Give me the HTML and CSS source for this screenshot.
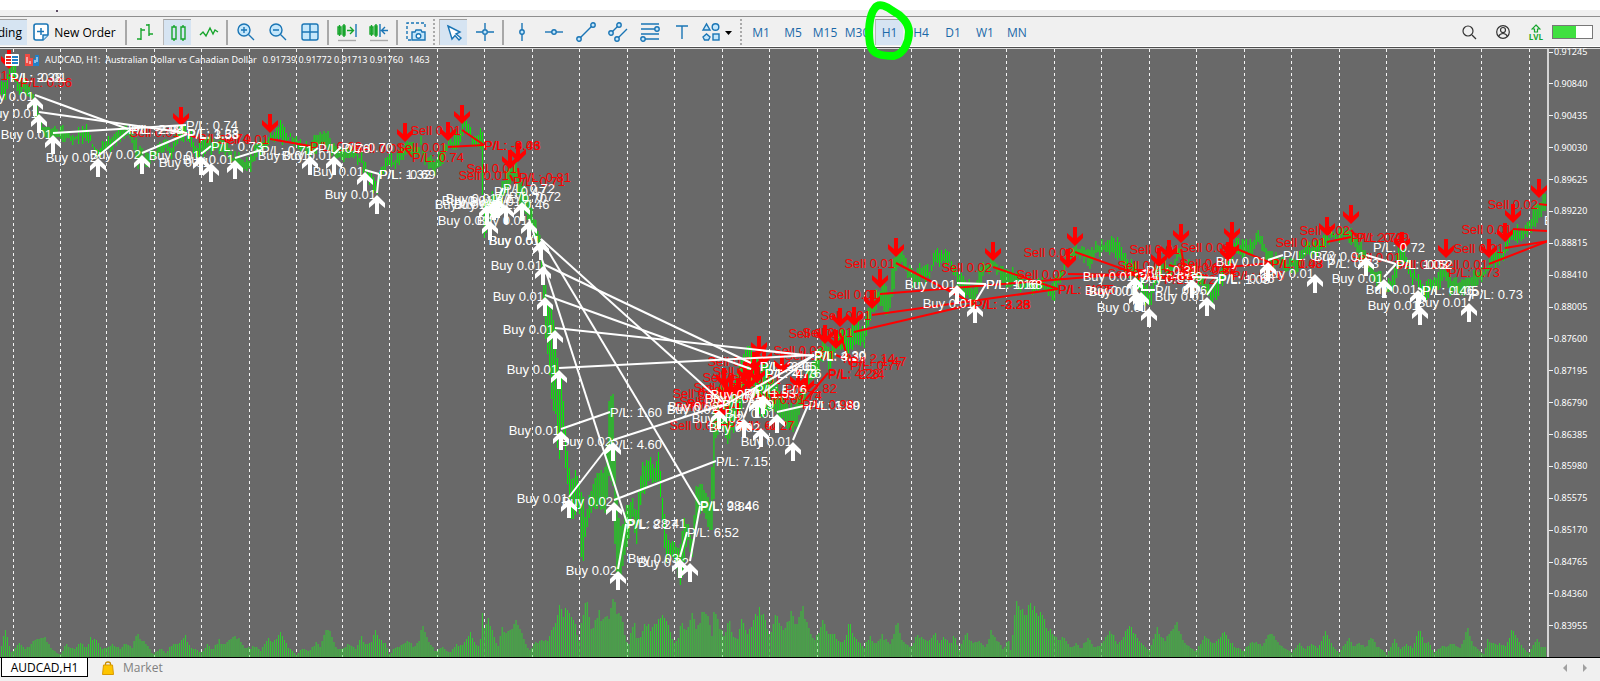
FILE: index.html
```
<!DOCTYPE html>
<html lang="en">
<head>
    <meta charset="UTF-8">
    <title>AUDCAD,H1</title>
    <link rel="stylesheet" href="styles.css">
</head>
<body>
    <div class="top-strip"><span class="mark"></span></div>
    <div class="menu-strip"></div>

    <div class="toolbar">
        <button class="algo active">ding</button>
        <button class="new-order">
            <svg width="16" height="18" viewBox="0 0 16 18"><path d="M3 1H13Q15 1 15 3V12L10 17H3Q1 17 1 15V3Q1 1 3 1Z" fill="#fff" stroke="#1a75b5" stroke-width="1.6"/><path d="M15 12H10V17" fill="#bfe3fa" stroke="#1a75b5" stroke-width="1.4"/><path d="M8 5V12M4 8.500H11" stroke="#1a75b5" stroke-width="1.5"/></svg>
            <span>New Order</span>
        </button>
        <span class="separator"></span>

        <div class="group green">
            <button aria-label="Bar chart"><svg width="20" height="20" viewBox="0 0 20 20"><path d="M6 6V18M6 8H10M2 17H6M14 2V14M11 3H14M14 12H18"/></svg></button>
            <button class="active" aria-label="Candles"><svg width="20" height="20" viewBox="0 0 20 20"><path d="M4 4H8V16H4ZM6 2V4M6 16V18M13 4H17V16H13ZM15 2V4M15 16V18"/></svg></button>
            <button aria-label="Line chart"><svg width="20" height="20" viewBox="0 0 20 20"><path d="M1 13L4 10L7 14L11 6L14 12L16 8L19 10"/></svg></button>
        </div>
        <span class="separator"></span>
        <div class="group">
            <button aria-label="Zoom in"><svg width="20" height="20" viewBox="0 0 20 20"><circle cx="8" cy="8" r="6" fill="#c5e7fb"/><path d="M12.500 12.500L18 18M5 8H11M8 5V11"/></svg></button>
            <button aria-label="Zoom out"><svg width="20" height="20" viewBox="0 0 20 20"><circle cx="8" cy="8" r="6" fill="#c5e7fb"/><path d="M12.500 12.500L18 18M5 8H11"/></svg></button>
            <button aria-label="Tile windows"><svg width="20" height="20" viewBox="0 0 20 20"><rect x="2" y="2" width="16" height="16" rx="2" fill="#c5e7fb"/><path d="M10 2V18M2 10H18"/></svg></button>
        </div>
        <span class="separator"></span>
        <div class="group">
            <button aria-label="Auto scroll"><svg width="22" height="20" viewBox="0 0 22 20"><path class="up" d="M2 5H5V12H2ZM3.500 3V14M7 4H9V13H7ZM8 2V15M11 8.500H17M14 5L17.500 8.500L14 12"/><path d="M20 2V15"/><path class="base" d="M2 18.500H20"/></svg></button>
            <button aria-label="Chart shift"><svg width="22" height="20" viewBox="0 0 22 20"><path class="up" d="M2 5H5V12H2ZM3.500 3V14M7 4H9V13H7ZM8 2V15"/><path d="M12 2V15M20 8.500H14M17 5L13.500 8.500L17 12"/><path class="base" d="M2 18.500H20"/></svg></button>
        </div>
        <span class="separator"></span>
        <div class="group">
            <button aria-label="Screenshot"><svg width="20" height="20" viewBox="0 0 20 20"><path d="M5 18H1V1H19V7" stroke-dasharray="3 2"/><path d="M6 10H9L10 8H15L16 10H19V18H6Z" fill="#c5e7fb"/><circle cx="12.500" cy="14" r="2.300" fill="#fff"/></svg></button>
        </div>
        <span class="handle"></span>
        <div class="group">
            <button class="active" aria-label="Cursor"><svg width="20" height="20" viewBox="0 0 20 20"><path d="M4 3L16 9L12 11L17 15L15 17L11 12.500L8 16Z" fill="#fff"/></svg></button>
            <button aria-label="Crosshair"><svg width="20" height="20" viewBox="0 0 20 20"><path d="M10 1V7M10 13V19M1 10H7M13 10H19"/><circle cx="10" cy="10" r="2.300" fill="#c5e7fb"/></svg></button>
        </div>
        <span class="separator"></span>
        <div class="group">
            <button aria-label="Vertical line"><svg width="20" height="20" viewBox="0 0 20 20"><path d="M10 1V19"/><circle cx="10" cy="10" r="2.200" fill="#c5e7fb"/></svg></button>
            <button aria-label="Horizontal line"><svg width="20" height="20" viewBox="0 0 20 20"><path d="M1 10H19"/><circle cx="10" cy="10" r="2.200" fill="#c5e7fb"/></svg></button>
            <button aria-label="Trend line"><svg width="20" height="20" viewBox="0 0 20 20"><path d="M3 17L17 3"/><circle cx="3" cy="17" r="2.200" fill="#c5e7fb"/><circle cx="17" cy="3" r="2.200" fill="#c5e7fb"/></svg></button>
            <button aria-label="Channel"><svg width="20" height="20" viewBox="0 0 20 20"><path d="M3 11L11 3M9 17L19 7"/><circle cx="3" cy="11" r="2.200" fill="#c5e7fb"/><circle cx="11" cy="3" r="2.200" fill="#c5e7fb"/><circle cx="9" cy="17" r="2.200" fill="#c5e7fb"/></svg></button>
            <button aria-label="Fibonacci"><svg width="20" height="20" viewBox="0 0 20 20"><path d="M1 2H19M1 7H17M1 12H19M3 17H19"/><circle cx="17" cy="7" r="2.200" fill="#c5e7fb"/><circle cx="3" cy="17" r="2.200" fill="#c5e7fb"/></svg></button>
            <button aria-label="Text"><svg width="20" height="20" viewBox="0 0 20 20"><path d="M4 4H16M10 4V17"/></svg></button>
            <button class="shapes" aria-label="Shapes"><svg width="34" height="20" viewBox="0 0 34 20"><g fill="#c5e7fb"><path d="M2 8L5.500 2L9 8Z"/><circle cx="14.500" cy="5" r="3.300"/><path d="M2 15L5.500 12L9 15L7.500 18H3.500Z"/><rect x="12" y="12" width="6" height="6"/></g><path class="caret" d="M24 9H31L27.500 13Z"/></svg></button>
        </div>
        <span class="handle wide"></span>
        <div class="group frames">
            <button>M1</button>
            <button>M5</button>
            <button>M15</button>
            <button>M30</button>
            <button class="active marked">H1
                <svg class="ring" width="52" height="62" viewBox="0 0 52 62"><path d="M12 7C16 1 25 6 30 10C38 14 46 22 46 31C46 40 42 52 31 55C20 55 9 54 7 43C5 31 6 14 12 7Z"/></svg>
            </button>
            <button>H4</button>
            <button>D1</button>
            <button>W1</button>
            <button>MN</button>
        </div>

        <div class="status">
            <svg width="16" height="16" viewBox="0 0 16 16"><circle cx="7" cy="7" r="5"/><path d="M11 11L15 15"/></svg>
            <svg width="16" height="16" viewBox="0 0 16 16"><circle cx="8" cy="8" r="6.300"/><circle cx="8" cy="6" r="2.500"/><path d="M3.500 12.500Q5 9.500 8 9.500T12.500 12.500"/></svg>
            <div class="level">
                <svg width="10" height="9" viewBox="0 0 10 9"><path d="M5 1L9 5H6.500V8H3.500V5H1Z"/></svg>
                <span>LVL</span>
            </div>
            <div class="battery"><span></span></div>
        </div>
    </div>

    <div class="chart">
        <svg class="plot" id="plot"></svg>
        <div class="caption">
            <svg width="14" height="12" viewBox="0 0 14 12"><rect x="0" y="0" width="14" height="12" rx="1" fill="#fff"/><path d="M1 2H6V4H1ZM1 5H6V7H1ZM1 8H6V10H1Z" fill="#e5261f"/><path d="M7 2H13V4H7ZM7 5H13V7H7ZM7 8H13V10H7Z" fill="#2180c8"/></svg>
            <svg width="14" height="12" viewBox="0 0 14 12"><path d="M0 0H5V4H8V12H0Z" fill="#f04b43"/><path d="M8 5H10V1H14V12H8Z" fill="#2180c8"/><path d="M2 3V9M5 7V10M10 6V9M12 3V8" stroke="#fff"/></svg>
            <span>AUDCAD, H1:&nbsp; Australian Dollar vs Canadian Dollar</span>
            <span>0.91739 0.91772 0.91713 0.91760</span>
            <span>1463</span>
        </div>
        <div class="axis" id="axis"></div>
    </div>

    <div class="tabs">
        <button class="tab current">AUDCAD,H1</button>
        <button class="tab market">
            <svg width="12" height="14" viewBox="0 0 12 14"><path d="M3.500 6V3Q3.500 1 6 1T8.500 3V6" fill="none" stroke="#c58a00" stroke-width="1.300"/><path d="M1.500 4H10.500L11.500 13.500H0.500Z" fill="#fdc500" stroke="#d99a00"/></svg>
            <span>Market</span>
        </button>
        <div class="scroll">
            <button aria-label="Scroll left"><svg width="4" height="8" viewBox="0 0 4 8"><path d="M4 0V8L0 4Z"/></svg></button>
            <button aria-label="Scroll right"><svg width="4" height="8" viewBox="0 0 4 8"><path d="M0 0V8L4 4Z"/></svg></button>
        </div>
    </div>

    <script src="chart.js"></script>
</body>
</html>
```
FILE: styles.css
```
* {
    box-sizing: border-box;
}
body {
    margin: 0;
    height: 100vh;
    display: flex;
    flex-direction: column;
    background-color: #f0f0f0;
    font-family: "Open Sans", "Noto Sans", sans-serif;
    font-size: 12px;
    color: #000;
    overflow: hidden;
}
button {
    border: 0;
    padding: 0;
    background: none;
    font: inherit;
    color: inherit;
}
svg {
    display: block;
    flex: none;
}
.top-strip {
    flex: none;
    height: 12px;
    padding: 10px 0 0 56px;
    background: linear-gradient(#fff 10px, #f0f0f0 10px);
}
.mark {
    display: block;
    width: 2px;
    height: 2px;
    background-color: #5b4a63;
}
.menu-strip {
    flex: none;
    height: 4px;
}

/* Toolbar */
.toolbar {
    flex: none;
    display: flex;
    align-items: center;
    height: 33px;
    padding: 2px 0 4px;
    border-top: 1px solid #8f8f8f;
    background: linear-gradient(#f0f0f0 29px, #fff 29px, #fff 30px, #4e4e4e 30px, #4e4e4e 31px, #d8d8d8 31px);
}
.toolbar button {
    position: relative;
    display: flex;
    align-items: center;
    justify-content: center;
    width: 28px;
    height: 26px;
}
.toolbar .active {
    background-color: #d6e4f2;
    border-top: 1px solid #a0a0a0;
    border-left: 1px solid #b8b8b8;
}
.toolbar .algo {
    width: 27px;
    justify-content: flex-end;
    padding-right: 5px;
    border-left: 0;
}
.toolbar .new-order {
    width: 95px;
    gap: 5px;
}
.group {
    display: flex;
    gap: 4px;
}
.group svg {
    fill: none;
    stroke: #1a75b5;
    stroke-width: 1.4;
}
.green svg,
.group .up {
    stroke: #17a52c;
}
.group .base {
    stroke: #aaa;
}
.group .caret {
    fill: #000;
    stroke: none;
}
.separator {
    width: 2px;
    height: 25px;
    margin: 0 4px 0 3px;
    background-color: #a8a8a8;
}
.handle {
    width: 2px;
    height: 26px;
    margin: 0 4px 0 3px;
    background: repeating-linear-gradient(#aaa 0 2px, #f0f0f0 2px 4px);
}
.wide {
    margin: 0 5px 0 4px;
}
.toolbar .shapes {
    width: 36px;
}
.frames {
    color: #1a68a8;
}
.group .ring {
    position: absolute;
    left: -13px;
    top: -19px;
    z-index: 2;
    stroke: #00ff00;
    stroke-width: 8;
    stroke-linejoin: round;
}
.status {
    display: flex;
    align-items: center;
    margin-left: auto;
    padding-right: 7px;
}
.status svg {
    fill: none;
    stroke: #333;
    stroke-width: 1.2;
    margin-right: 18px;
}
.level {
    display: flex;
    flex-direction: column;
    align-items: center;
    margin-right: 9px;
    font-size: 8px;
    line-height: 8px;
    font-weight: bold;
    color: #17a52c;
}
.level svg {
    stroke: #17a52c;
    margin: 0;
}
.battery {
    width: 41px;
    height: 14px;
    border: 1px solid #777;
    background-color: #fff;
}
.battery span {
    display: block;
    width: 58%;
    height: 100%;
    background-color: #40e040;
}

/* Chart */
.chart {
    position: relative;
    flex: 1;
    min-height: 0;
    display: flex;
    background-color: #696969;
}
.plot {
    flex: 1;
    min-width: 0;
    height: 100%;
    font-family: "Liberation Sans", Arial, sans-serif;
    font-size: 13px;
}
.grid {
    stroke: #f4f4f4;
    stroke-dasharray: 3 3;
}
.volume {
    stroke: #32cd32;
}
.bars {
    stroke: #00f400;
}
.buy {
    fill: #fff;
}
.sell {
    fill: #ff0000;
}
.buy-line,
.sell-line {
    stroke: #fff;
    stroke-width: 2;
}
.sell-line {
    stroke: #ff0000;
}
.caption {
    position: absolute;
    left: 5px;
    top: 4px;
    display: flex;
    align-items: center;
    gap: 6px;
    font-family: "Noto Sans", sans-serif;
    font-size: 9px;
    line-height: 14px;
    color: #fff;
}
.axis {
    flex: none;
    display: flex;
    flex-direction: column;
    justify-content: space-between;
    width: 53px;
    border-left: 2px solid #d4d4d4;
    padding-bottom: 25px;
    font-family: "Noto Sans", sans-serif;
    font-size: 9px;
    line-height: 12px;
    color: #fff;
}
.axis span {
    display: flex;
    align-items: center;
    gap: 1px;
}
.axis span:first-child {
    margin-top: -3px;
}
.axis span::before {
    content: "";
    width: 4px;
    height: 1px;
    background-color: #f4f4f4;
}

/* Bottom tabs */
.tabs {
    flex: none;
    display: flex;
    height: 24px;
    border-top: 1px solid #000;
}
.tab {
    display: flex;
    align-items: center;
    height: 19px;
}
.current {
    justify-content: center;
    width: 87px;
    margin-left: 1px;
    background-color: #fff;
    border: solid #000;
    border-width: 0 1px 1px;
}
.market {
    gap: 9px;
    margin-left: 14px;
    color: #808080;
}
.scroll {
    display: flex;
    gap: 16px;
    margin-left: auto;
    padding: 0 13px 4px 0;
}
.scroll svg {
    fill: #a0a0a0;
}
```
FILE: chart.js
```
const NS = 'http://www.w3.org/2000/svg';
const plot = document.getElementById('plot');
const TOP = 49;
const BOTTOM = 657;
const STEP = 1.979;

const gridX = [13, 60, 106, 154, 201, 249, 296, 342, 389, 437, 484, 532, 579, 627, 674, 722, 769,
    817, 864, 911, 959, 1006, 1054, 1101, 1149, 1196, 1244, 1291, 1339, 1386, 1434, 1481, 1529];

// x, height
const volume = [
    [1,10],[5,30],[7,22],[10,8],[12,3],[16,10],[20,14],[25,8],[30,12],[36,18],[44,20],[50,10],[58,3],[61,3],[66,12],[74,8],[80,14],[86,9],[91,20],[96,16],[102,8],
    [106,8],[112,13],[120,8],[126,14],[132,10],[138,23],[142,17],[148,12],[153,2],[160,9],[166,4],[172,12],[180,14],[185,21],[190,10],[196,8],[200,4],[204,6],[207,12],
    [213,7],[219,17],[224,11],[232,20],[239,18],[245,8],[250,9],[256,11],[260,6],[268,18],[272,13],[278,22],[282,25],[288,11],[296,2],[302,8],[310,6],[316,14],[320,10],
    [325,25],[328,28],[333,17],[338,7],[343,9],[350,13],[356,7],[361,20],[366,12],[372,14],[375,27],[379,18],[385,14],[390,2],[394,9],[400,11],[409,17],[413,10],[419,15],[423,34],
    [427,19],[432,11],[436,5],[442,10],[450,4],[456,13],[462,10],[470,26],[474,14],[480,10],[482,42],[485,28],[488,37],[494,22],[498,11],[502,28],[506,24],[510,30],[512,26],
    [516,40],[520,30],[524,17],[530,7],[534,13],[540,17],[548,15],[552,30],[555,28],[559,51],[563,43],[567,52],[571,39],[576,30],[579,15],[583,46],[587,52],[592,24],[598,46],
    [602,36],[608,39],[610,41],[612,60],[616,48],[620,45],[624,28],[628,10],[634,37],[637,16],[642,22],[646,35],[652,27],[658,36],[662,39],[666,40],[672,18],[676,13],[682,34],
    [686,27],[692,43],[696,28],[703,45],[706,45],[709,36],[712,21],[714,49],[720,30],[724,22],[729,37],[733,19],[738,19],[742,37],[748,22],[754,40],[760,48],[765,39],[768,22],
    [772,26],[775,43],[780,30],[785,27],[791,45],[796,30],[803,49],[809,27],[814,16],[818,22],[824,37],[828,21],[834,22],[840,15],[844,13],[849,34],[856,19],[864,9],[870,20],
    [876,13],[882,21],[890,13],[894,24],[898,34],[902,18],[910,9],[918,22],[924,16],[932,18],[935,24],[940,13],[944,22],[950,13],[955,22],[959,7],[966,25],[972,13],[980,15],
    [986,10],[991,25],[996,18],[1004,7],[1008,19],[1011,6],[1016,49],[1018,54],[1024,43],[1031,54],[1036,46],[1042,43],[1046,30],[1053,24],[1058,15],[1063,20],[1070,10],
    [1076,13],[1082,9],[1088,20],[1094,9],[1100,10],[1110,25],[1118,14],[1130,30],[1140,14],[1149,6],[1157,28],[1165,16],[1176,35],[1184,14],[1196,6],[1206,22],[1214,12],
    [1224,25],[1234,10],[1244,6],[1252,16],[1262,12],[1270,24],[1280,12],[1292,4],[1300,14],[1304,8],[1312,13],[1318,9],[1326,26],[1330,15],[1336,8],[1339,3],[1344,12],
    [1349,20],[1354,10],[1360,14],[1366,9],[1372,22],[1376,12],[1382,8],[1387,2],[1394,18],[1400,7],[1406,12],[1413,10],[1417,22],[1420,30],[1425,12],[1429,16],[1434,4],
    [1440,10],[1448,12],[1454,14],[1460,9],[1464,18],[1468,27],[1472,14],[1480,6],[1484,3],[1488,18],[1494,12],[1500,14],[1506,10],[1512,27],[1516,23],[1522,10],[1529,3],
    [1537,20],[1542,8],[1548,14]
];

// x, high, low
const price = [
    [0,75,95],[5,82,100],[9,66,80],[14,62,76],[18,80,92],[26,80,90],[31,92,100],[38,112,125],[44,125,135],[50,128,138],[58,130,140],[64,128,138],[72,136,144],[80,130,140],
    [88,126,140],[92,140,148],[98,148,155],[104,142,152],[110,135,148],[118,130,142],[126,126,135],[132,130,140],[138,148,165],[146,155,165],[155,148,156],[165,143,152],
    [172,145,155],[180,124,136],[190,130,140],[196,145,158],[206,140,152],[214,142,154],[222,138,150],[232,155,162],[240,156,165],[247,160,175],[254,150,162],[262,140,152],
    [270,134,142],[277,132,142],[282,120,142],[288,132,140],[296,136,144],[304,142,150],[312,145,156],[317,132,150],[322,132,145],[328,130,150],[332,145,155],[340,150,160],
    [346,152,162],[352,145,156],[358,152,162],[364,158,170],[370,172,185],[376,180,196],[382,165,175],[388,155,164],[395,160,170],[402,145,160],[405,140,150],[411,145,158],
    [418,145,160],[421,140,148],[426,155,165],[436,158,172],[444,150,162],[448,138,148],[454,140,150],[460,130,142],[464,122,130],[470,128,136],[474,140,148],[480,132,142],
    [482,115,180],[484,190,235],[488,205,230],[492,190,210],[496,195,215],[502,185,205],[508,170,190],[512,165,180],[516,165,180],[519,178,200],[525,190,215],[530,205,222],
    [536,225,245],[540,240,260],[544,270,320],[548,300,360],[552,310,400],[556,330,420],[559,375,470],[562,380,420],[565,420,465],[569,470,500],[572,480,520],[576,470,510],
    [580,490,520],[582,490,579],[585,515,535],[589,500,520],[594,480,505],[600,475,510],[606,470,510],[609,400,480],[613,390,490],[616,480,570],[620,530,575],[626,510,550],
    [633,500,520],[637,515,545],[641,470,500],[646,460,490],[650,460,480],[655,465,480],[659,450,480],[662,490,520],[666,535,560],[670,540,560],[675,545,560],[680,550,590],
    [684,520,560],[688,520,540],[692,540,560],[696,490,525],[700,480,510],[705,490,510],[711,500,538],[714,400,500],[716,395,440],[722,385,425],[728,400,440],[733,390,430],
    [738,370,420],[745,350,390],[750,345,380],[756,360,400],[762,360,420],[770,370,410],[776,385,415],[782,395,420],[788,405,425],[794,405,432],[800,390,415],[806,375,395],
    [812,365,382],[818,350,372],[824,340,356],[830,350,370],[836,335,350],[842,330,345],[848,335,358],[852,325,350],[858,325,340],[864,330,345],[868,310,330],[872,300,315],
    [878,290,305],[885,285,310],[889,300,315],[892,270,300],[896,250,270],[902,248,258],[908,265,275],[914,270,285],[922,265,280],[930,270,280],[935,250,265],[942,252,265],
    [950,255,265],[958,275,285],[966,280,298],[974,285,305],[980,270,285],[986,262,272],[992,258,268],[1000,270,278],[1008,272,285],[1016,270,284],[1025,278,290],
    [1034,280,292],[1042,280,290],[1050,285,292],[1054,280,300],[1060,272,280],[1068,255,265],[1075,242,255],[1082,248,258],[1090,250,265],[1097,243,255],[1106,242,250],
    [1112,240,252],[1120,242,258],[1128,262,272],[1136,265,280],[1144,285,300],[1150,290,310],[1156,265,285],[1164,262,272],[1170,265,275],[1180,248,260],[1186,262,275],
    [1192,265,280],[1200,275,285],[1206,280,290],[1212,290,305],[1220,270,290],[1230,258,268],[1235,238,250],[1244,243,255],[1252,240,255],[1258,230,245],[1265,242,255],
    [1272,255,268],[1280,258,265],[1290,260,270],[1298,258,270],[1306,245,258],[1316,245,258],[1327,235,242],[1340,232,240],[1350,230,240],[1358,240,255],[1366,255,265],
    [1374,268,280],[1380,270,285],[1386,285,295],[1392,278,292],[1400,240,260],[1404,250,265],[1410,268,280],[1418,275,285],[1424,285,300],[1432,282,292],[1440,270,285],
    [1445,268,275],[1450,280,292],[1458,282,292],[1464,280,292],[1472,275,288],[1480,270,282],[1486,268,276],[1490,255,268],[1497,255,265],[1504,248,258],[1510,235,245],
    [1514,225,240],[1520,228,240],[1528,222,232],[1534,210,225],[1540,200,215],[1548,190,205]
];

// x, arrow tip, lot, close x, close y, profit
const sells = [
    [9,68,'0.01',20,82,'0.56'],[181,125,'0.01',198,138,'0.74'],[270,132,'0.01',310,146,'0.68'],[405,141,'0.01',412,157,'0.74'],[448,140,'0.01',484,145,'-3.06'],
    [462,123,'0.01',484,145,'-0.43'],[510,168,'0.01',513,181,'0.71'],[518,161,'0.01',519,177,'0.81'],
    [759,354,'0.01'],[764,364,'0.01'],[754,370,'0.01'],[749,388,'0.01'],[726,399,'0.01'],[721,418,'0.02',727,425,'1.60'],[724,386,'0.01'],[731,394,'0.02'],[745,380,'0.01'],
    [757,382,'0.02'],[782,372,'0.01'],[806,392,'0.01',828,373,'4.28'],[798,388,'0.01',770,395,'0.74'],[738,396,'0.01',738,425,'-0.27'],
    [825,343,'0.02'],[836,348,'0.01',843,358,'2.14'],[840,326,'0.01',850,365,'0.77'],[854,325,'0.01',974,304,'-3.28'],[872,308,'0.01',1058,289,'-4.25'],
    [880,287,'0.01',1137,273,'3.20'],[896,256,'0.01',974,304,'-2.35'],[993,260,'0.02',1058,289,'2.27'],[1068,267,'0.02',1137,275,'-2.84'],[1075,245,'0.02',1137,274,'2.31'],
    [1159,266,'0.01',1164,279,'0.72'],[1169,258,'0.01',1180,268,'-0.92'],[1181,242,'0.01',1185,270,'0.32'],[1228,260,'0.01',1271,263,'1.03'],[1232,240,'0.01',1271,263,'0.48'],
    [1231,256,'0.01',1232,275,'0.76'],[1327,235,'0.01',1351,237,'2.70'],[1351,223,'0.02',1357,237,'0.49'],[1402,250,'0.01'],[1446,257,'0.01',1448,272,'0.73'],
    [1489,257,'0.01',1548,241],[1505,241,'0.01',1548,241],[1513,222,'0.01',1548,231],[1539,197,'0.02',1548,205]
];
const buys = [
    [35,98,'0.01',128,129,'-2.94'],[39,115,'0.01',187,133,'1.38'],[53,136,'0.01',186,125,'0.74'],[98,159,'0.02',131,129,'2.98'],[142,156,'0.02',187,134,'3.53'],
    [201,157,'0.01',211,146,'0.73'],[211,164,'0.01'],[235,161,'0.01',261,150,'0.71'],[310,157,'0.01',318,148,'0.76'],[334,157,'0.01',341,147,'0.70'],
    [365,173,'0.01',379,174,'-0.69'],[377,196,'0.01',379,174,'1.32'],
    [494,202,'0.01'],[487,206,'0.01'],[490,222,'0.01',503,188,'0.72'],[506,206,'0.01',509,196,'0.72'],[498,200,'0.01'],[522,203,'0.01'],[529,222,'0.01',627,523,'28.41'],
    [541,242,'0.01',722,402],[541,242,'0.01',700,505,'28.46'],[543,267,'0.01',751,363],[545,298,'0.01',751,369],[555,331,'0.01',814,356,'3.29'],[559,371,'0.01',814,355,'4.30'],
    [561,432,'0.01',610,412,'1.60'],[569,500,'0.01',610,444,'4.60'],[613,443,'0.02',722,405],[614,503,'0.02',716,461,'7.15'],[618,572,'0.02',626,524,'8.27'],
    [680,560,'0.03',687,532,'6.52'],[690,564,'0.02',700,506,'9.84'],
    [719,411,'0.02',814,355],[744,420,'0.02',755,388],[761,429,'0.02'],[777,415,'0.01',808,405,'1.80'],[793,443,'0.01',808,405,'3.99'],[757,400,'0.01'],[763,396,'0.01',814,355],
    [957,286,'0.01',986,284,'-0.68'],[975,305,'0.01',986,284,'1.16'],
    [1135,278,'0.01',1146,270,'0.31'],[1137,292,'0.01',1146,276,'-0.59'],[1141,293,'0.01',1155,290,'0.96'],[1149,309,'0.01'],[1192,280,'0.01',1218,278,'-0.66'],[1207,298,'0.01',1218,279,'1.08'],
    [1268,263,'0.01',1283,255,'0.72'],[1315,275,'0.01'],[1366,258,'0.01',1396,264,'-0.52'],[1384,280,'0.01',1396,264,'1.03'],[1418,291,'0.01',1422,290,'0.46'],
    [1420,307,'0.01',1422,290,'-1.05'],[1469,304,'0.01',1471,294,'0.73']
];

// labels without a line: kind, x, baseline, text
const notes = [
    ['buy',10,82,'P/L: 2.38'],['buy',10,82,'P/L: -0.01'],['buy',494,196,'P/L: 0.47'],['buy',493,209,'P/L: -0.46'],['buy',495,203,'P/L: 0.70'],
    ['buy',760,371,'P/L: 3.96'],['buy',760,371,'P/L: -3.05'],['buy',765,378,'P/L: 4.73'],['buy',765,378,'P/L: -4.76'],['buy',755,394,'P/L: 5.06'],['buy',744,398,'P/L: 1.53'],
    ['buy',722,409,'P/L: 0.99'],['buy',668,411,'Buy 0.02'],['buy',1373,252,'P/L: 0.72'],['buy',1327,268,'P/L: 0.73'],['buy',1544,225,'Buy 0.01'],
    ['sell',785,393,'P/L: 2.82'],['sell',802,409,'P/L: 0.98'],['sell',828,379,'P/L: -2.24'],['sell',850,366,'P/L: -1.47'],['sell',1137,280,'P/L: -2.31'],['sell',974,309,'P/L: -3.28']
];

// Small repeatable noise so neighbouring bars differ
let seed = 7;
function noise() {
    seed = (seed * 16807) % 2147483647;
    return seed / 2147483647 - 0.5;
}

function valueAt(points, x, col) {
    let i = 1;
    while (i < points.length - 1 && points[i][0] < x) i++;
    const a = points[i - 1];
    const b = points[i];
    const t = Math.max(0, Math.min(1, (x - a[0]) / (b[0] - a[0])));
    return a[col] + (b[col] - a[col]) * t;
}

function add(tag, attrs, text) {
    const el = document.createElementNS(NS, tag);
    for (const key in attrs) el.setAttribute(key, attrs[key]);
    if (text) el.textContent = text;
    plot.appendChild(el);
}

function drawBars() {
    let vol = '';
    let bars = '';
    for (let x = 1.5; x < 1547; x += STEP) {
        const h = Math.max(2, valueAt(volume, x, 1) * (1 + noise() * 0.2));
        vol += `M${x.toFixed(2)} ${BOTTOM}v${-Math.round(h)}`;
        const high = valueAt(price, x, 1) + noise() * 9;
        const low = valueAt(price, x, 2) + noise() * 9;
        bars += `M${x.toFixed(2)} ${Math.round(high)}V${Math.round(Math.max(low, high + 3))}`;
    }
    add('path', { class: 'volume', d: vol });
    add('path', { class: 'bars', d: bars });
}

function drawTrades(list, kind) {
    const dir = kind === 'buy' ? 1 : -1;
    const startY = kind === 'buy' ? -3 : 7;
    list.forEach(([x, tip]) => {
        add('path', {
            class: kind,
            d: `M${x} ${tip - dir}l8 ${8 * dir}v${5 * dir}l-6 ${-5 * dir}v${11 * dir}h-4v${-11 * dir}l-6 ${5 * dir}v${-5 * dir}z`
        });
    });
    list.forEach(([x, tip, lot, cx, cy, profit]) => {
        if (cx) add('line', { class: kind + '-line', x1: x, y1: tip + startY, x2: cx, y2: cy });
        add('text', { class: kind, x: x - 1, y: tip + (kind === 'buy' ? 3 : 12), 'text-anchor': 'end' },
            (kind === 'buy' ? 'Buy ' : 'Sell ') + lot);
        if (profit) add('text', { class: kind, x: cx, y: cy + 5 }, 'P/L: ' + profit);
    });
}

plot.setAttribute('viewBox', `0 ${TOP} 1547 ${BOTTOM - TOP}`);
plot.setAttribute('preserveAspectRatio', 'xMinYMin slice');
gridX.forEach(x => add('line', { class: 'grid', x1: x + 0.5, x2: x + 0.5, y1: TOP, y2: BOTTOM }));
drawBars();
drawTrades(sells, 'sell');
drawTrades(buys, 'buy');
notes.forEach(([kind, x, y, text]) => add('text', { class: kind, x, y }, text));

const axis = document.getElementById('axis');
for (let i = 0; i < 19; i++) {
    const label = document.createElement('span');
    label.textContent = (0.91245 - i * 0.00405).toFixed(5);
    axis.appendChild(label);
}
```
